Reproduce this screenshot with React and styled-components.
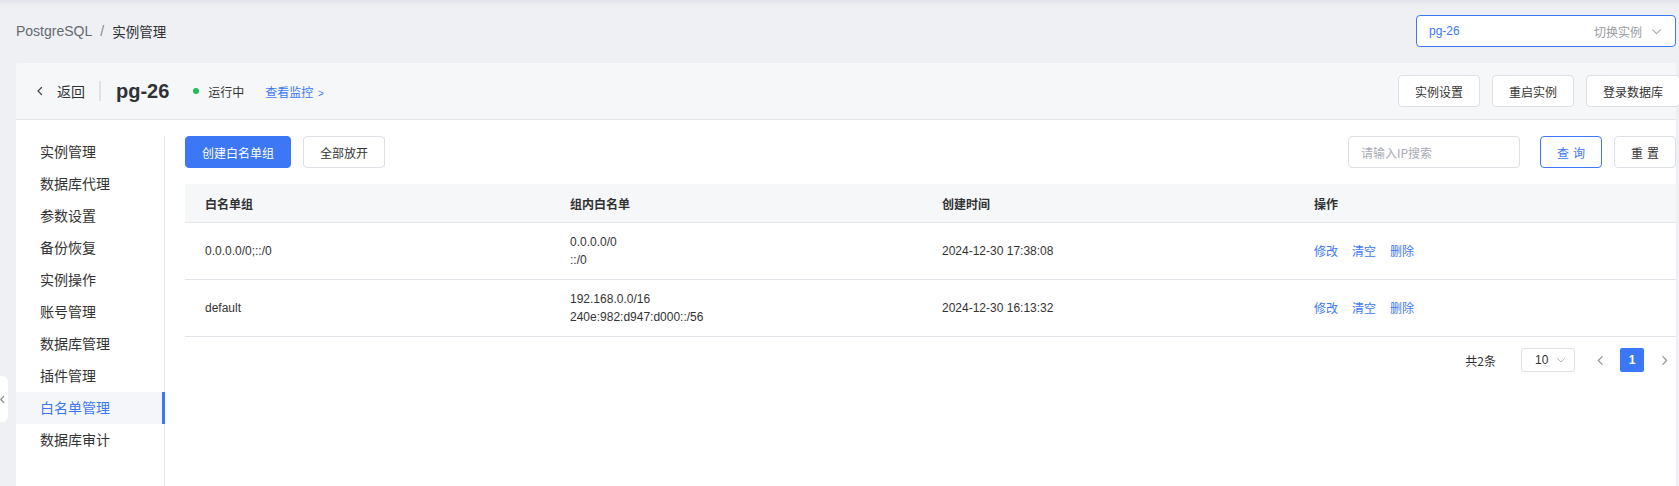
import React from "react";
import styled, { createGlobalStyle } from "styled-components";

const GlobalStyle = createGlobalStyle`
  html, body {
    margin: 0;
    padding: 0;
    background: #eef0f4;
    overflow: hidden;
  }
  body {
    font-family: "Liberation Sans", Arial, "Noto Sans CJK SC", sans-serif;
    color: #333333;
  }
  * {
    box-sizing: border-box;
  }
`;

const menu = [
  "实例管理",
  "数据库代理",
  "参数设置",
  "备份恢复",
  "实例操作",
  "账号管理",
  "数据库管理",
  "插件管理",
  "白名单管理",
  "数据库审计",
];

const rows = [
  {
    group: "0.0.0.0/0;::/0",
    ips: ["0.0.0.0/0", "::/0"],
    time: "2024-12-30 17:38:08",
  },
  {
    group: "default",
    ips: ["192.168.0.0/16", "240e:982:d947:d000::/56"],
    time: "2024-12-30 16:13:32",
  },
];

const Chevron = ({ dir = "left", size = 10, color = "#666", weight = 1.2 }) => {
  const d = {
    left: "M6.5 1.5 L3 5 L6.5 8.5",
    right: "M3.5 1.5 L7 5 L3.5 8.5",
    down: "M1.5 3.5 L5 7 L8.5 3.5",
  }[dir];
  return (
    <svg width={size} height={size} viewBox="0 0 10 10" fill="none">
      <path d={d} stroke={color} strokeWidth={weight} strokeLinecap="round" strokeLinejoin="round" />
    </svg>
  );
};

export default function App() {
  return (
    <>
      <GlobalStyle />
      <Page>
        <CollapseTab>
          <Chevron dir="left" size={9} color="#888" />
        </CollapseTab>
        <TopBar>
          <Breadcrumb>
            <CrumbMuted>PostgreSQL</CrumbMuted>
            <CrumbSep>/</CrumbSep>
            <CrumbCurrent>实例管理</CrumbCurrent>
          </Breadcrumb>
          <InstanceSelect>
            <SelectValue>pg-26</SelectValue>
            <SelectHint>
              切换实例
              <Chevron dir="down" size={11} color="#aaa" weight={1} />
            </SelectHint>
          </InstanceSelect>
        </TopBar>

        <Card>
          <CardHeader>
            <HeaderLeft>
              <BackLink>
                <Chevron dir="left" size={10} color="#444" />
                <span>返回</span>
              </BackLink>
              <VDivider />
              <InstanceName>pg-26</InstanceName>
              <Status>
                <Dot />
                运行中
              </Status>
              <MonitorLink>
                查看监控 <small>&gt;</small>
              </MonitorLink>
            </HeaderLeft>
            <HeaderActions>
              <Button>实例设置</Button>
              <Button>重启实例</Button>
              <Button>登录数据库</Button>
            </HeaderActions>
          </CardHeader>

          <CardBody>
            <Sidebar>
              {menu.map((m) => (
                <MenuItem key={m} $active={m === "白名单管理"}>
                  {m}
                </MenuItem>
              ))}
            </Sidebar>

            <Content>
              <Toolbar>
                <ToolGroup>
                  <Button $primary>创建白名单组</Button>
                  <Button>全部放开</Button>
                </ToolGroup>
                <ToolGroup>
                  <SearchInput placeholder="请输入IP搜索" />
                  <SpacedButton $outline>查询</SpacedButton>
                  <SpacedButton>重置</SpacedButton>
                </ToolGroup>
              </Toolbar>

              <Table>
                <HeadRow>
                  <HeadCell>白名单组</HeadCell>
                  <HeadCell>组内白名单</HeadCell>
                  <HeadCell>创建时间</HeadCell>
                  <HeadCell>操作</HeadCell>
                </HeadRow>
                {rows.map((r) => (
                  <BodyRow key={r.group}>
                    <Cell>{r.group}</Cell>
                    <Cell>
                      {r.ips.map((ip) => (
                        <div key={ip}>{ip}</div>
                      ))}
                    </Cell>
                    <Cell>{r.time}</Cell>
                    <Cell>
                      <Actions>
                        <ActionLink>修改</ActionLink>
                        <ActionLink>清空</ActionLink>
                        <ActionLink>删除</ActionLink>
                      </Actions>
                    </Cell>
                  </BodyRow>
                ))}
              </Table>

              <Pager>
                <Total>共2条</Total>
                <PageSize>
                  10
                  <Chevron dir="down" size={10} color="#b5b8bf" weight={1} />
                </PageSize>
                <PageArrow>
                  <Chevron dir="left" size={11} color="#999" />
                </PageArrow>
                <PageNum $active>1</PageNum>
                <PageArrow>
                  <Chevron dir="right" size={11} color="#999" />
                </PageArrow>
              </Pager>
            </Content>
          </CardBody>
        </Card>
      </Page>
    </>
  );
}

const Page = styled.div`
  position: relative;
  min-height: 486px;
  padding: 0 3px 0 16px;
  background: linear-gradient(to bottom, #dfe2e8 0px, #eceef2 5px, #eef0f4 10px);
`;

const CollapseTab = styled.div`
  position: absolute;
  left: 0;
  top: 376px;
  width: 8px;
  height: 46px;
  background: #ffffff;
  border-radius: 0 6px 6px 0;
  display: flex;
  align-items: center;
  justify-content: flex-start;
  z-index: 2;
  svg {
    margin-left: -2px;
  }
`;

const TopBar = styled.div`
  height: 63px;
  display: flex;
  align-items: center;
  justify-content: space-between;
`;

const Breadcrumb = styled.div`
  display: flex;
  align-items: center;
  font-size: 14px;
  margin-top: -1px;
`;

const CrumbMuted = styled.span`
  color: #666a70;
`;

const CrumbSep = styled.span`
  color: #888;
  margin: 0 8px;
`;

const CrumbCurrent = styled.span`
  color: #303133;
  font-family: "Noto Sans CJK SC", sans-serif;
  font-size: 13.5px;
`;

const InstanceSelect = styled.div`
  width: 260px;
  height: 32px;
  margin-top: -1px;
  display: flex;
  align-items: center;
  justify-content: space-between;
  padding: 0 13px 0 12px;
  background: #ffffff;
  border: 1px solid #3c77f6;
  border-radius: 4px;
  font-size: 12px;
`;

const SelectValue = styled.span`
  color: #3c77f6;
`;

const SelectHint = styled.span`
  display: flex;
  align-items: center;
  gap: 9px;
  color: #999ba1;
  font-family: "Noto Sans CJK SC", sans-serif;
`;

const Card = styled.div`
  background: #ffffff;
  border-radius: 4px 0 0 0;
  min-height: 423px;
`;

const CardHeader = styled.div`
  height: 57px;
  display: flex;
  align-items: center;
  justify-content: space-between;
  padding: 0 0 0 19px;
  background: #f6f7f9;
  border-bottom: 1px solid #e3e5ea;
  border-radius: 4px 0 0 0;
`;

const HeaderLeft = styled.div`
  display: flex;
  align-items: center;
`;

const BackLink = styled.div`
  display: flex;
  align-items: center;
  gap: 12px;
  font-family: "Noto Sans CJK SC", sans-serif;
  font-size: 14px;
  color: #333;
`;

const VDivider = styled.div`
  width: 2px;
  height: 20px;
  background: #dfe1e6;
  margin: 0 15px 0 14px;
`;

const InstanceName = styled.div`
  font-size: 20px;
  font-weight: 700;
  color: #303133;
`;

const Status = styled.div`
  display: flex;
  align-items: center;
  margin-left: 24px;
  font-family: "Noto Sans CJK SC", sans-serif;
  font-size: 12px;
  color: #333;
`;

const Dot = styled.span`
  width: 6px;
  height: 6px;
  border-radius: 50%;
  background: #1fbf5c;
  margin-right: 9px;
`;

const MonitorLink = styled.a`
  margin-left: 21px;
  font-family: "Noto Sans CJK SC", sans-serif;
  font-size: 12px;
  color: #3c77f6;
  small {
    font-family: "Liberation Sans", sans-serif;
    font-size: 10px;
    margin-left: 2px;
  }
`;

const HeaderActions = styled.div`
  display: flex;
  gap: 12px;
  margin-right: -4px;
  flex-shrink: 0;
`;

const Button = styled.button`
  height: 32px;
  padding: 0 16px;
  border-radius: 4px;
  border: 1px solid ${(p) => (p.$primary ? "#3c77f6" : "#dcdfe4")};
  background: ${(p) => (p.$primary ? "#3c77f6" : "#ffffff")};
  color: ${(p) => (p.$primary ? "#ffffff" : "#333333")};
  font-family: "Noto Sans CJK SC", sans-serif;
  font-size: 12px;
  white-space: nowrap;
  cursor: pointer;
  flex-shrink: 0;
`;

const SpacedButton = styled(Button)`
  width: 62px;
  padding: 0;
  letter-spacing: 4px;
  text-indent: 4px;
  border-color: ${(p) => (p.$outline ? "#3c77f6" : "#dcdfe4")};
  color: ${(p) => (p.$outline ? "#3c77f6" : "#333333")};
`;

const CardBody = styled.div`
  display: flex;
`;

const Sidebar = styled.div`
  width: 149px;
  flex-shrink: 0;
  margin-top: 16px;
  min-height: 350px;
  border-right: 1px solid #e5e7ec;
`;

const MenuItem = styled.div`
  position: relative;
  height: 32px;
  line-height: 31px;
  padding-left: 24px;
  font-family: "Noto Sans CJK SC", sans-serif;
  font-size: 14px;
  color: ${(p) => (p.$active ? "#3c77f6" : "#333333")};
  background: ${(p) => (p.$active ? "#f5f6f9" : "transparent")};
  &::after {
    content: "";
    display: ${(p) => (p.$active ? "block" : "none")};
    position: absolute;
    top: 0;
    right: -1px;
    width: 3px;
    height: 100%;
    background: #3c77f6;
  }
`;

const Content = styled.div`
  flex: 1;
  padding: 16px 0 0 20px;
`;

const Toolbar = styled.div`
  display: flex;
  justify-content: space-between;
  align-items: center;
`;

const ToolGroup = styled.div`
  display: flex;
  align-items: center;
  gap: 12px;
`;

const SearchInput = styled.input`
  width: 172px;
  height: 32px;
  margin-right: 8px;
  padding: 0 12px;
  border: 1px solid #dcdfe4;
  border-radius: 4px;
  font-family: "Noto Sans CJK SC", sans-serif;
  font-size: 12px;
  outline: none;
  &::placeholder {
    color: #a8abb2;
  }
`;

const Table = styled.div`
  margin-top: 16px;
  font-size: 12px;
`;

const gridCols = `365px 372px 372px 1fr`;

const HeadRow = styled.div`
  display: grid;
  grid-template-columns: ${gridCols};
  height: 39px;
  align-items: center;
  background: #f6f7f9;
  border-bottom: 1px solid #e3e5ea;
`;

const HeadCell = styled.div`
  padding-left: 20px;
  font-family: "Noto Sans CJK SC", sans-serif;
  font-weight: 700;
  color: #303133;
`;

const BodyRow = styled.div`
  display: grid;
  grid-template-columns: ${gridCols};
  height: 57px;
  align-items: center;
  border-bottom: 1px solid #e3e5ea;
`;

const Cell = styled.div`
  padding-left: 20px;
  line-height: 18px;
  color: #333333;
`;

const Actions = styled.div`
  display: flex;
  gap: 14px;
`;

const ActionLink = styled.a`
  font-family: "Noto Sans CJK SC", sans-serif;
  color: #3c77f6;
  cursor: pointer;
`;

const Pager = styled.div`
  display: flex;
  justify-content: flex-end;
  align-items: center;
  margin-top: 11px;
  height: 24px;
  font-size: 12px;
`;

const Total = styled.span`
  font-family: "Noto Sans CJK SC", sans-serif;
  color: #333;
  margin-right: 25px;
`;

const PageSize = styled.div`
  width: 54px;
  height: 24px;
  display: flex;
  align-items: center;
  justify-content: space-between;
  padding: 0 8px 0 13px;
  border: 1px solid #dcdfe4;
  border-radius: 3px;
  color: #333;
  margin-right: 13px;
`;

const PageArrow = styled.div`
  width: 24px;
  height: 24px;
  display: flex;
  align-items: center;
  justify-content: center;
`;

const PageNum = styled.div`
  width: 24px;
  height: 24px;
  margin: 0 8px;
  display: flex;
  align-items: center;
  justify-content: center;
  border-radius: 2px;
  background: ${(p) => (p.$active ? "#3c77f6" : "transparent")};
  color: ${(p) => (p.$active ? "#ffffff" : "#333")};
  font-weight: 700;
`;
